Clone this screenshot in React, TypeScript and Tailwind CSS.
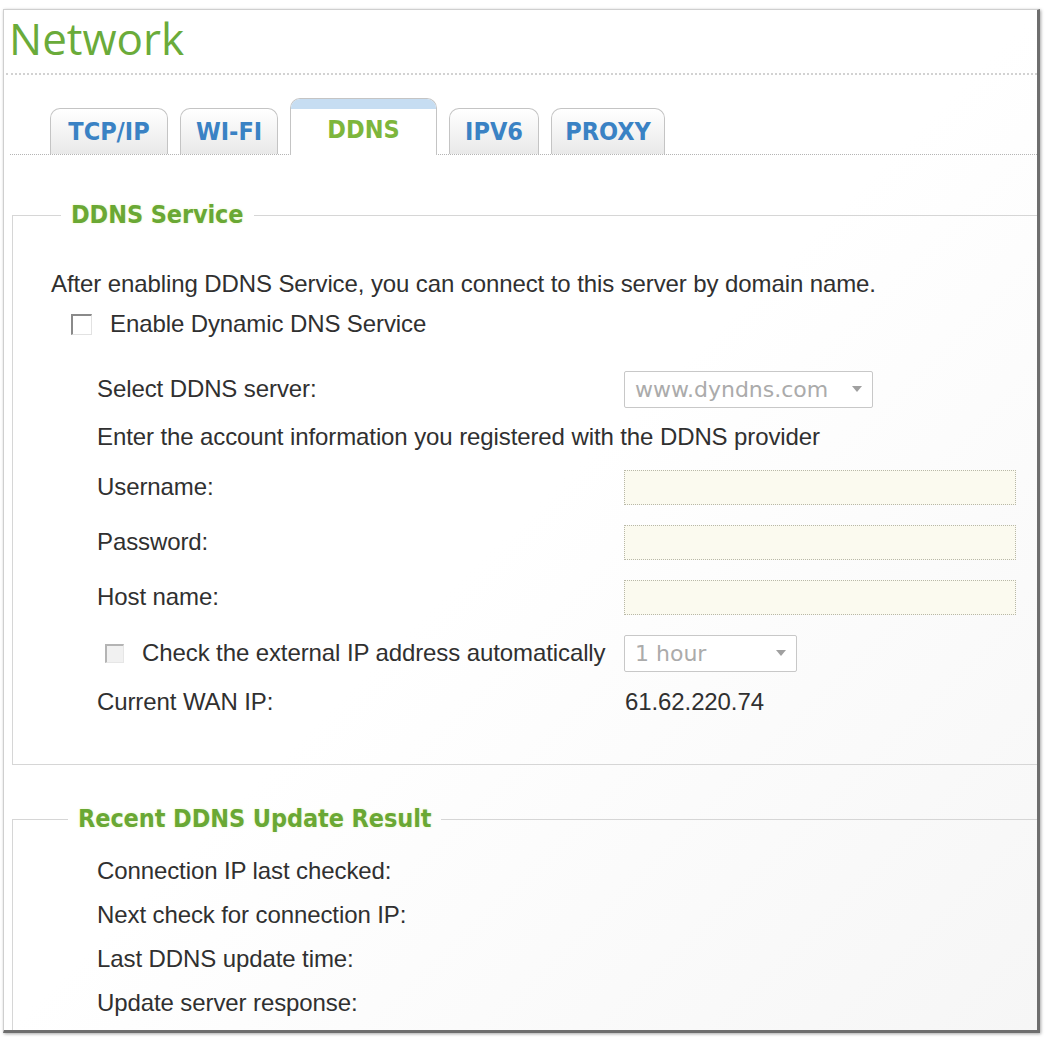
import React from "react";

const tabs = [
  { label: "TCP/IP", w: "w-[118px]", active: false },
  { label: "WI-FI", w: "w-[98px]", active: false },
  { label: "DDNS", w: "w-[147px]", active: true },
  { label: "IPV6", w: "w-[90px]", active: false },
  { label: "PROXY", w: "w-[114px]", active: false },
];

function Tab({ label, w, active }: { label: string; w: string; active: boolean }) {
  if (active) {
    return (
      <div
        className={`${w} relative -mb-px flex h-[57px] flex-col overflow-hidden rounded-t-[10px] border border-b-0 border-[#c4c4c4] bg-white`}
      >
        <div className="h-[10px] bg-[#c6ddf2]" />
        <div className="flex flex-1 items-center justify-center pb-[4px] font-['DejaVu_Sans_Condensed',sans-serif] text-[25px] font-bold text-[#7db63c]">
          {label}
        </div>
      </div>
    );
  }
  return (
    <div
      className={`${w} flex h-[46px] items-center justify-center rounded-t-[10px] border border-b-0 border-[#c4c4c4] bg-gradient-to-b from-white to-[#e9e9e9] font-['DejaVu_Sans_Condensed',sans-serif] text-[25px] font-bold text-[#3a82c4]`}
    >
      {label}
    </div>
  );
}

function Legend({ children, ml }: { children: React.ReactNode; ml: string }) {
  return (
    <legend
      className={`${ml} px-[10px] font-['DejaVu_Sans_Condensed',sans-serif] text-[25px] font-bold leading-[24px] text-[#6aa834] [text-shadow:0_0_3px_#e8f5c8]`}
    >
      {children}
    </legend>
  );
}

function Checkbox({ disabled }: { disabled?: boolean }) {
  if (disabled) {
    return (
      <span className="inline-block h-[19px] w-[19px] border-b border-l-2 border-r border-t-2 border-b-[#e6e6e6] border-l-[#b4b4b4] border-r-[#e6e6e6] border-t-[#b4b4b4] bg-[#f1f1f1]" />
    );
  }
  return (
    <span className="inline-block h-[21px] w-[21px] border-b border-l-2 border-r border-t-2 border-b-[#e2e2e2] border-l-[#8a8a8a] border-r-[#e2e2e2] border-t-[#8a8a8a] bg-white" />
  );
}

function Select({ value, w }: { value: string; w: string }) {
  return (
    <div
      className={`${w} flex h-[37px] items-center justify-between rounded-[2px] border border-[#c8c8c8] bg-white pl-[10px] pr-[10px] font-['DejaVu_Sans',sans-serif] text-[22px] tracking-normal text-[#ababab]`}
    >
      <span>{value}</span>
      <svg width="10" height="6" viewBox="0 0 10 6">
        <path d="M0 0 L10 0 L5 6 Z" fill="#a0a0a0" />
      </svg>
    </div>
  );
}

function TextInput() {
  return <div className="h-[35px] w-[392px] border border-dotted border-[#b8b8a8] bg-[#fbfaef]" />;
}

function Row({ label, children }: { label: string; children?: React.ReactNode }) {
  return (
    <div className="flex h-[40px] items-center">
      <div className="w-[611px] pl-[84px]">{label}</div>
      {children}
    </div>
  );
}

const results = [
  "Connection IP last checked:",
  "Next check for connection IP:",
  "Last DDNS update time:",
  "Update server response:",
];

export default function App() {
  return (
    <div className="min-h-screen bg-white pl-[3px] pt-[9px] font-['Liberation_Sans',Arial,sans-serif] text-[24px] tracking-[-0.1px] text-[#303030]">
      <div className="flex h-[1024px] w-[1037px] flex-col border-l border-t border-[#cfcfcf] border-b-[3px] border-r-[3px] border-b-[#6e6e6e] border-r-[#6e6e6e] bg-gradient-to-br from-white via-white to-[#f6f6f6] shadow-[1px_1px_3px_rgba(0,0,0,0.35)]">
        <h1 className="ml-[5px] pt-[1px] font-['Open_Sans',sans-serif] text-[44px] leading-[54px] tracking-normal text-[#6aab3a]">
          Network
        </h1>
        <div className="ml-[2px] mt-[8px] border-b-2 border-dotted border-[#d2d2d2]" />

        <div className="ml-[6px] mt-[23px] flex h-[57px] items-end gap-[12px] border-b border-dotted border-[#b4b4b4] pl-[40px] tracking-normal">
          {tabs.map((t) => (
            <Tab key={t.label} {...t} />
          ))}
        </div>

        <fieldset className="ml-[8px] mt-[48px] border-b border-l border-t border-[#d6d6d6]">
          <Legend ml="ml-[48px]">DDNS Service</Legend>
          <div className="pb-[42px] pt-[37px]">
            <div className="flex h-[40px] items-center pl-[38px]">
              After enabling DDNS Service, you can connect to this server by domain name.
            </div>
            <div className="flex h-[40px] items-center">
              <div className="ml-[58px] mr-[18px] flex">
                <Checkbox />
              </div>
              Enable Dynamic DNS Service
            </div>
            <div className="mt-[25px]">
              <Row label="Select DDNS server:">
                <Select value="www.dyndns.com" w="w-[249px]" />
              </Row>
            </div>
            <div className="mt-[8px] flex h-[40px] items-center pl-[84px]">
              Enter the account information you registered with the DDNS provider
            </div>
            <div className="mt-[10px]">
              <Row label="Username:">
                <TextInput />
              </Row>
            </div>
            <div className="mt-[15px]">
              <Row label="Password:">
                <TextInput />
              </Row>
            </div>
            <div className="mt-[15px]">
              <Row label="Host name:">
                <TextInput />
              </Row>
            </div>
            <div className="mt-[16px] flex h-[40px] items-center">
              <div className="flex w-[611px] items-center whitespace-nowrap pl-[92px]">
                <span className="mr-[18px] flex">
                  <Checkbox disabled />
                </span>
                Check the external IP address automatically
              </div>
              <Select value="1 hour" w="w-[173px]" />
            </div>
            <div className="mt-[9px]">
              <Row label="Current WAN IP:">
                <span className="pl-[1px]">61.62.220.74</span>
              </Row>
            </div>
          </div>
        </fieldset>

        <fieldset className="ml-[8px] mt-[42px] flex-1 border-l border-t border-[#d6d6d6]">
          <Legend ml="ml-[55px]">Recent DDNS Update Result</Legend>
          <div className="pt-[18px]">
            {results.map((r) => (
              <div key={r} className="flex h-[44px] items-center pl-[84px]">
                {r}
              </div>
            ))}
          </div>
        </fieldset>
      </div>
    </div>
  );
}
